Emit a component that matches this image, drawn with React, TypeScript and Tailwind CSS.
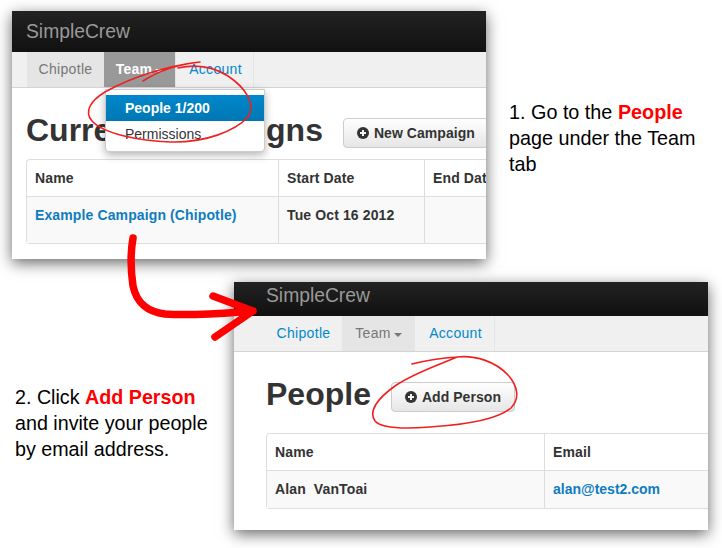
import { ReactNode } from 'react'

function PlusIcon() {
  return (
    <svg width="12" height="12" viewBox="0 0 12 12" className="shrink-0">
      <circle cx="6" cy="6" r="6" fill="#333333" />
      <path d="M6 3v6M3 6h6" stroke="#f2f2f2" strokeWidth="2" />
    </svg>
  )
}

function Caret({ className }: { className: string }) {
  return <span className={`ml-[3px] mt-[2px] inline-block size-0 border-x-[4px] border-t-[4px] border-x-transparent ${className}`} />
}

function Tab({ children, className }: { children: ReactNode; className: string }) {
  return <div className={`flex h-full items-center justify-center border-r border-[#e5e5e5] tracking-[0.3px] ${className}`}>{children}</div>
}

function Button({ label }: { label: string }) {
  return (
    <div className="flex h-[30px] shrink-0 items-center gap-[5px] rounded-[4px] border border-[#cccccc] bg-gradient-to-b from-white to-[#e6e6e6] px-[13px] text-[14px] font-bold tracking-[0.05px] whitespace-nowrap text-[#333333]">
      <PlusIcon />
      {label}
    </div>
  )
}

function Window({ className, headerClass, tabs, children }: { className: string; headerClass: string; tabs: ReactNode; children: ReactNode }) {
  return (
    <section className={`absolute flex h-[248px] w-[474px] flex-col overflow-hidden bg-white shadow-[0_4px_14px_rgba(0,0,0,0.6)] ${className}`}>
      <header className={`flex shrink-0 items-center bg-gradient-to-b from-[#222222] to-[#111111] text-[19.3px] text-[#999999] ${headerClass}`}>SimpleCrew</header>
      <nav className="flex h-[36px] shrink-0 border-b border-[#d4d4d4] bg-[#f0f0f0] text-[14px]">{tabs}</nav>
      {children}
    </section>
  )
}

export default function App() {
  return (
    <div className="relative h-[548px] w-[722px] overflow-hidden bg-white font-['Liberation_Sans',Arial,sans-serif]">
      <Window
        className="left-[12px] top-[11px]"
        headerClass="h-[41px] pl-[14px] pt-[2px]"
        tabs={
          <div className="ml-[15px] flex h-full">
            <Tab className="w-[77px] bg-[#e5e5e5] pl-[1px] text-[#777777]">Chipotle</Tab>
            <Tab className="w-[72px] bg-[#999999] font-bold text-white">
              Team
              <Caret className="border-t-white" />
            </Tab>
            <Tab className="w-[78px] pl-[2px] text-[#0088cc]">Account</Tab>
          </div>
        }
      >
        <div className="flex flex-col px-[14px]">
          <div className="mt-[30px] flex h-[30px] items-center">
            <h1 className="pb-[6px] text-[32px] font-bold whitespace-nowrap text-[#333333]">Current Campaigns</h1>
            <div className="ml-[20px]">
              <Button label="New Campaign" />
            </div>
          </div>
          <div className="mt-[11px] w-[470px] rounded-tl-[4px] rounded-bl-[4px] border-y border-l border-[#dddddd] text-[14px] font-bold tracking-[0.12px] text-[#333333]">
            <div className="grid h-[37px] grid-cols-[251px_146px_1fr] items-center border-b border-[#dddddd]">
              <div className="pl-[8px]">Name</div>
              <div className="flex h-full items-center border-l border-[#dddddd] pl-[8px]">Start Date</div>
              <div className="flex h-full items-center overflow-hidden border-l border-[#dddddd] pl-[8px] whitespace-nowrap">End Date</div>
            </div>
            <div className="grid h-[46px] grid-cols-[251px_146px_1fr] bg-[#f9f9f9]">
              <div className="pl-[8px] pt-[8px] text-[#0f7cc0]">Example Campaign (Chipotle)</div>
              <div className="border-l border-[#dddddd] pl-[8px] pt-[8px]">Tue Oct 16 2012</div>
              <div className="border-l border-[#dddddd]" />
            </div>
          </div>
        </div>
        <div className="absolute left-[93px] top-[78px] h-[63px] w-[160px] rounded-b-[4px] border border-[#cccccc] bg-white pt-[5px] text-[14px] shadow-[0_3px_8px_rgba(0,0,0,0.3)]">
          <div className="flex h-[26px] items-center bg-gradient-to-b from-[#0088cc] to-[#0077b3] pl-[19px] font-bold text-white">People 1/200</div>
          <div className="flex h-[26px] items-center pl-[19px] text-[#333333]">Permissions</div>
        </div>
      </Window>

      <Window
        className="left-[234px] top-[282px]"
        headerClass="h-[34px] pb-[6px] pl-[32px]"
        tabs={
          <div className="ml-[31px] flex h-full">
            <Tab className="w-[78px] text-[#0088cc]">Chipotle</Tab>
            <Tab className="w-[72px] bg-[#e5e5e5] text-[#777777]">
              Team
              <Caret className="border-t-[#777777]" />
            </Tab>
            <Tab className="w-[80px] pl-[2px] text-[#0088cc]">Account</Tab>
          </div>
        }
      >
        <div className="flex flex-col px-[32px]">
          <div className="mt-[30px] flex h-[30px] items-center">
            <h1 className="pb-[6px] text-[32px] font-bold text-[#333333]">People</h1>
            <div className="ml-[20px]">
              <Button label="Add Person" />
            </div>
          </div>
          <div className="mt-[21px] w-[442px] rounded-tl-[4px] rounded-bl-[4px] border-y border-l border-[#dddddd] text-[14px] font-bold tracking-[0.12px] text-[#333333]">
            <div className="grid h-[37px] grid-cols-[277px_1fr] items-center border-b border-[#dddddd]">
              <div className="pl-[8px]">Name</div>
              <div className="flex h-full items-center border-l border-[#dddddd] pl-[8px]">Email</div>
            </div>
            <div className="grid h-[37px] grid-cols-[277px_1fr] items-center bg-[#f9f9f9]">
              <div className="pl-[8px] whitespace-pre">Alan  VanToai</div>
              <div className="flex h-full items-center border-l border-[#dddddd] pl-[8px] tracking-normal text-[#0f7cc0]">alan@test2.com</div>
            </div>
          </div>
        </div>
      </Window>

      <p className="absolute left-[509px] top-[99px] w-[205px] text-[19.8px] leading-[26px] text-black">
        1. Go to the <span className="font-bold text-[#ff0000]">People</span> page under the Team tab
      </p>
      <p className="absolute left-[15px] top-[384px] w-[205px] text-[19.7px] leading-[26px] text-black">
        2. Click <span className="font-bold text-[#ff0000]">Add Person</span> and invite your people by email address.
      </p>

      <svg className="absolute inset-0" width="722" height="548" viewBox="0 0 722 548" fill="none" strokeLinecap="round" strokeLinejoin="round">
        <path d="M200 62 C180 64 160 70 143 81 M200 62 C165 66 130 78 105 92 C90 101 84 112 92 121 C104 134 140 141 170 142 C205 143 235 131 248 117 C256 104 246 88 228 76 C214 67 196 64 178 68" stroke="#f02020" strokeWidth="1.6" />
        <path d="M412 364 C428 360 442 358 457 357 C476 355 496 362 508 375 C518 386 520 399 511 408 C497 420 462 425 430 427 C405 429 382 429 375 421 C368 411 378 398 395 386 C412 374 436 366 457 357" stroke="#f02020" strokeWidth="1.6" />
        <path d="M133 238 C130 255 131 272 133 286 C137 304 148 312 165 314 C195 316 225 313 253 311 M213 296 L253 311 L215 337" stroke="#ff0000" strokeWidth="7.5" />
      </svg>
    </div>
  )
}
